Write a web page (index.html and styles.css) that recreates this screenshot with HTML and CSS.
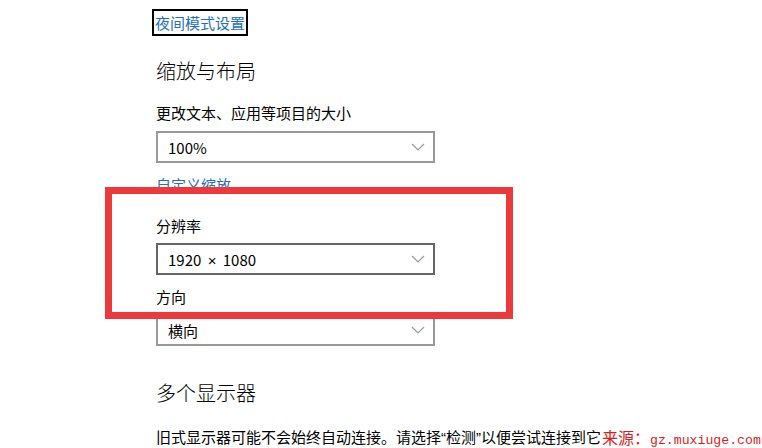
FILE: index.html
```html
<!DOCTYPE html>
<html lang="zh-CN">
<head>
<meta charset="utf-8">
<link rel="stylesheet" href="styles.css">
</head>
<body>
<div class="page">
  <a class="link focus" href="#">夜间模式设置</a>
  <h2 class="heading first">缩放与布局</h2>
  <div class="label l1">更改文本、应用等项目的大小</div>
  <div class="select s1"><span>100%</span><svg class="chev" width="14" height="8" viewBox="0 0 14 8"><path d="M1 1 L7 7 L13 1" fill="none" stroke="#9a9a9a" stroke-width="1.2"/></svg></div>
  <a class="link l2" href="#">自定义缩放</a>
  <div class="label l3">分辨率</div>
  <div class="select s2 hover"><span>1920 <span class="latin times">×</span> 1080</span><svg class="chev" width="14" height="8" viewBox="0 0 14 8"><path d="M1 1 L7 7 L13 1" fill="none" stroke="#9a9a9a" stroke-width="1.2"/></svg></div>
  <div class="label l4">方向</div>
  <div class="select s3"><span>横向</span><svg class="chev" width="14" height="8" viewBox="0 0 14 8"><path d="M1 1 L7 7 L13 1" fill="none" stroke="#9a9a9a" stroke-width="1.2"/></svg></div>
  <h2 class="heading second">多个显示器</h2>
  <p class="para">旧式显示器可能不会始终自动连接。请选择<span class="latin">“</span>检测<span class="latin">”</span>以便尝试连接到它</p>
</div>
<div class="highlight"></div>
<div class="watermark">来源：<span class="wm-latin">gz.muxiuge.com</span></div>
</body>
</html>
```
FILE: styles.css
```css
html, body {
  margin: 0;
  padding: 0;
  background: #fff;
  width: 762px;
  height: 448px;
  overflow: hidden;
}
body {
  position: relative;
  font-family: "Noto Sans CJK SC", "Noto Sans", sans-serif;
  color: #000;
}
.page {
  display: flex;
  flex-direction: column;
  align-items: flex-start;
  padding: 9px 0 0 156px;
}
.latin {
  font-family: "Liberation Sans", "Noto Sans", sans-serif;
}
.times {
  padding: 0 3px;
}
.link {
  color: #2470b8;
  text-decoration: none;
  font-size: 15px;
  line-height: 20px;
  display: block;
}
.link.focus {
  border: 2px solid #000;
  padding: 0 1px;
  margin-left: -4px;
  line-height: 23px;
}
.heading {
  margin: 0;
  font-weight: 300;
  font-size: 20px;
  line-height: 28px;
}
.heading.first { margin-top: 21px; }
.heading.second { margin-top: 33px; }
.label {
  font-size: 15px;
  line-height: 20px;
}
.l1 { margin-top: 18px; }
.l2 { margin-top: 12px; }
.l3 { margin-top: 21px; }
.l4 { margin-top: 12px; }
.select {
  box-sizing: border-box;
  width: 279px;
  height: 32px;
  border: 2px solid #999;
  display: flex;
  align-items: center;
  justify-content: space-between;
  padding: 0 8px 0 10px;
  font-size: 15px;
  margin-top: 8px;
}
.select.s2 { margin-top: 7px; }
.select.s3 { margin-top: 7px; }
.select.hover { border-color: #666; }
.chev { display: block; }
.para {
  margin: 20px 0 0;
  font-size: 15px;
  line-height: 20px;
  white-space: nowrap;
}
.highlight {
  position: absolute;
  left: 105px;
  top: 187px;
  width: 408px;
  height: 132px;
  box-sizing: border-box;
  border: 7px solid #ec3a3c;
}
.watermark {
  position: absolute;
  left: 602px;
  top: 427px;
  font-family: "Noto Sans CJK SC", serif;
  font-size: 16px;
  line-height: 20px;
  color: #d41f1f;
  white-space: nowrap;
}
.wm-latin {
  font-family: "Liberation Mono", monospace;
  font-size: 13.2px;
}
```
